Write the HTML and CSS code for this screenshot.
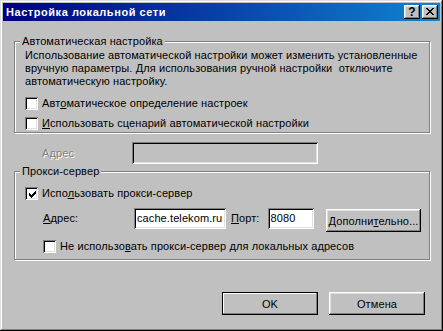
FILE: index.html
```html
<!DOCTYPE html>
<html lang="ru">
<head>
    <meta charset="UTF-8">
    <title>Настройка локальной сети</title>
    <link rel="stylesheet" href="styles.css">
</head>
<body>

<div class="window">
    <div class="titlebar">
        <span class="title">Настройка локальной сети</span>
        <div class="title-buttons">
            <span class="tbtn tbtn-help">?</span>
            <span class="tbtn">
                <svg width="8" height="7" viewBox="0 0 8 7" shape-rendering="crispEdges">
                    <path d="M0 0h2v1h-2z M6 0h2v1h-2z M1 1h2v1h-2z M5 1h2v1h-2z M2 2h4v1h-4z M3 3h2v1h-2z M2 4h4v1h-4z M1 5h2v1h-2z M5 5h2v1h-2z M0 6h2v1h-2z M6 6h2v1h-2z" fill="#000"/>
                </svg>
            </span>
        </div>
    </div>

    <div class="content">
        <fieldset class="group group-auto">
            <legend>Автоматическая настройка</legend>
            <p class="note">Использование автоматической настройки может изменить установленные<br>вручную параметры. Для использования ручной настройки&nbsp; отключите<br>автоматическую настройку.</p>
            <div class="check check-first">
                <span class="box"></span>
                <span>Авт<u>о</u>матическое определение настроек</span>
            </div>
            <div class="check">
                <span class="box"></span>
                <span><u>И</u>спользовать сценарий автоматической настройки</span>
            </div>
        </fieldset>

        <div class="script-row">
            <span class="script-label">Адрес</span>
            <span class="edit edit-disabled"></span>
        </div>

        <fieldset class="group group-proxy">
            <legend>Прокси-сервер</legend>
            <div class="check check-proxy">
                <span class="box">
                    <svg width="7" height="7" viewBox="0 0 7 7" shape-rendering="crispEdges">
                        <path d="M6 0h1v1h-1z M5 1h2v1h-2z M0 2h1v1h-1z M4 2h3v1h-3z M0 3h2v1h-2z M3 3h3v1h-3z M0 4h5v1h-5z M1 5h3v1h-3z M2 6h1v1h-1z" fill="#000"/>
                    </svg>
                </span>
                <span>Испо<u>л</u>ьзовать прокси-сервер</span>
            </div>
            <div class="proxy-row">
                <span class="proxy-label"><u>А</u>дрес:</span>
                <span class="edit edit-address">cache.telekom.ru</span>
                <span class="port-label"><u>П</u>орт:</span>
                <span class="edit edit-port">8080</span>
                <button class="btn btn-advanced">Дополни<u>т</u>ельно...</button>
            </div>
            <div class="check check-local">
                <span class="box"></span>
                <span>Не использо<u>в</u>ать прокси-сервер для локальных адресов</span>
            </div>
        </fieldset>

        <div class="actions">
            <button class="btn btn-default">OK</button>
            <button class="btn">Отмена</button>
        </div>
    </div>
</div>

</body>
</html>
```

FILE: styles.css
```css
    html, body {
        margin: 0;
        padding: 0;
        background-color: #C0C0C0;
    }

    body {
        font-family: "Liberation Sans", Arial, sans-serif;
        font-size: 11px;
        line-height: 13px;
        letter-spacing: 0.1px;
        color: #000;
    }

    .window {
        width: 443px;
        height: 331px;
        box-sizing: border-box;
        padding: 3px;
        background-color: #C0C0C0;
        box-shadow: inset -1px -1px 0 #000, inset 1px 1px 0 #DFDFDF,
                    inset -2px -2px 0 #808080, inset 2px 2px 0 #FFF;
    }

    /* title bar */
    .titlebar {
        height: 18px;
        display: flex;
        align-items: center;
        justify-content: space-between;
        padding: 0 2px 0 3px;
        background: linear-gradient(to right, #000080, #1084D0);
    }

    .title {
        color: #FFF;
        font-weight: bold;
        font-size: 11px;
        letter-spacing: 0.55px;
    }

    .title-buttons {
        display: flex;
        gap: 2px;
    }

    .tbtn {
        width: 16px;
        height: 14px;
        box-sizing: border-box;
        display: flex;
        align-items: center;
        justify-content: center;
        background-color: #C0C0C0;
        box-shadow: inset -1px -1px 0 #000, inset 1px 1px 0 #FFF,
                    inset -2px -2px 0 #808080, inset 2px 2px 0 #DFDFDF;
    }

    .tbtn svg {
        display: block;
        margin: 0 0 1px 0;
    }

    .tbtn-help {
        font-weight: bold;
        font-size: 12px;
        line-height: 12px;
        padding-bottom: 1px;
    }

    /* body */
    .content {
        padding: 14px 10px 0 11px;
    }

    .group {
        width: 416px;
        box-sizing: border-box;
        margin: 0;
        padding: 1px 8px 0 10px;
        min-width: 0;
        border: 1px solid #808080;
        box-shadow: 1px 1px 0 #FFF, inset 1px 1px 0 #FFF;
    }

    .group legend {
        padding: 0 2px;
        margin-left: -5px;
        background-color: #C0C0C0;
        line-height: 13px;
    }

    .group-auto {
        padding-bottom: 2px;
    }

    .group-proxy {
        margin-top: 1px;
        padding-bottom: 6px;
    }

    .note {
        margin: 0;
        white-space: nowrap;
    }

    .check {
        display: flex;
        align-items: center;
        gap: 4px;
        height: 13px;
        margin-top: 7px;
        white-space: nowrap;
    }

    .check-first {
        margin-top: 9px;
    }

    .check-proxy {
        margin-top: 8px;
    }

    .check-local {
        margin-top: 8px;
        padding-left: 18px;
    }

    .box {
        width: 13px;
        height: 13px;
        box-sizing: border-box;
        flex: none;
        display: flex;
        align-items: center;
        justify-content: center;
        background-color: #FFF;
        box-shadow: inset 1px 1px 0 #808080, inset -1px -1px 0 #FFF,
                    inset 2px 2px 0 #000, inset -2px -2px 0 #DFDFDF;
    }

    .box svg {
        display: block;
        margin: 1px 0 0 1px;
    }

    /* sunken edit fields */
    .edit {
        box-sizing: border-box;
        display: flex;
        align-items: center;
        padding: 0 2px 0 3px;
        background-color: #FFF;
        white-space: nowrap;
        box-shadow: inset 1px 1px 0 #808080, inset -1px -1px 0 #FFF,
                    inset 2px 2px 0 #000, inset -2px -2px 0 #DFDFDF;
    }

    .edit-disabled {
        width: 186px;
        height: 22px;
        background-color: #C0C0C0;
    }

    .script-row {
        display: flex;
        align-items: center;
        margin: 9px 0 0 28px;
    }

    .script-label {
        width: 90px;
        color: #808080;
        text-shadow: 1px 1px 0 #FFF;
    }

    .proxy-row {
        display: flex;
        align-items: flex-start;
        margin: 8px 0 0 18px;
        height: 24px;
    }

    .proxy-label {
        width: 92px;
        height: 21px;
        line-height: 21px;
    }

    .edit-address {
        width: 93px;
        height: 21px;
    }

    .port-label {
        margin-left: 5px;
        width: 37px;
        height: 21px;
        line-height: 21px;
    }

    .edit-port {
        width: 47px;
        height: 21px;
    }

    /* push buttons */
    .btn {
        width: 96px;
        height: 23px;
        box-sizing: border-box;
        margin: 0;
        padding: 0;
        border: none;
        font-family: inherit;
        font-size: 11px;
        letter-spacing: 0.1px;
        color: #000;
        background-color: #C0C0C0;
        box-shadow: inset -1px -1px 0 #000, inset 1px 1px 0 #FFF,
                    inset -2px -2px 0 #808080, inset 2px 2px 0 #DFDFDF;
    }

    .btn-advanced {
        margin: 1px 0 0 12px;
    }

    .btn-default {
        border: 1px solid #000;
        box-shadow: inset -1px -1px 0 #808080, inset 1px 1px 0 #FFF;
    }

    .actions {
        display: flex;
        justify-content: flex-end;
        gap: 11px;
        margin-top: 32px;
        padding-right: 5px;
    }
```
